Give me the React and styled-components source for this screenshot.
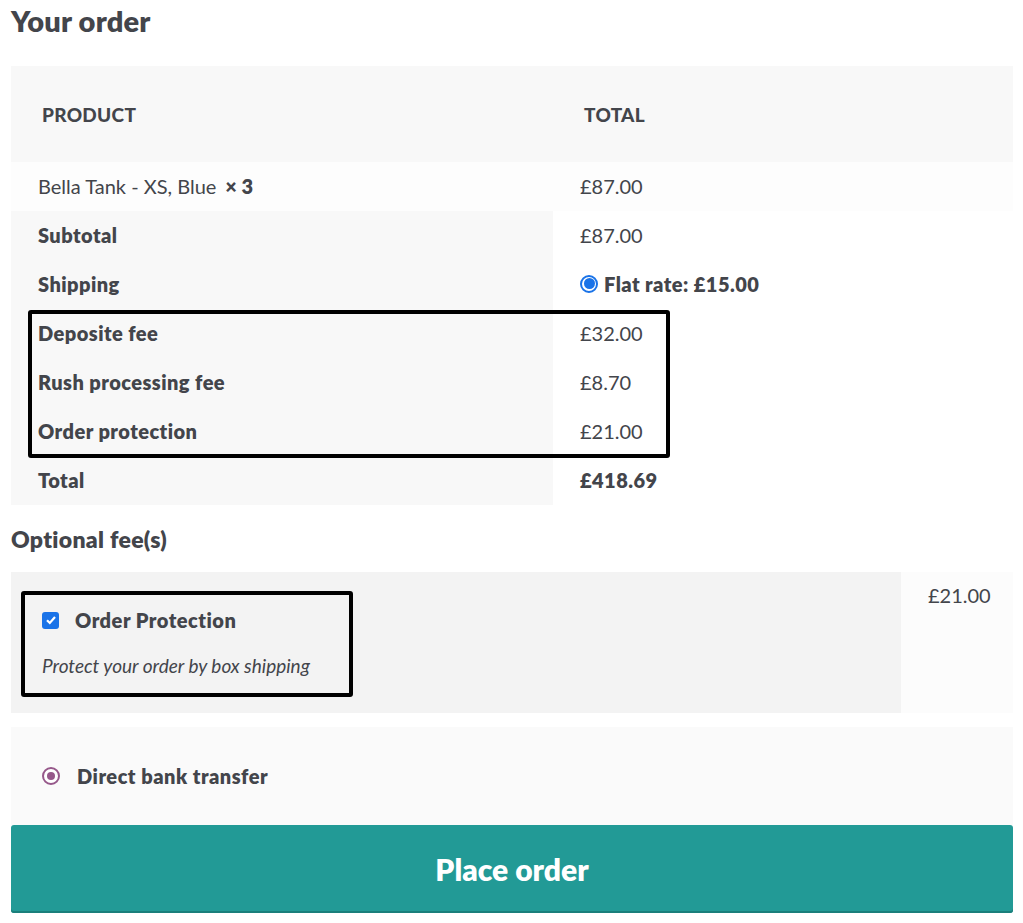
import React from "react";
import styled, { createGlobalStyle } from "styled-components";

const Global = createGlobalStyle`
  body {
    margin: 0;
    background: #fff;
    font-family: "Lato", "Liberation Sans", sans-serif;
    color: #43454b;
  }
`;

const Page = styled.div`
  width: 1002px;
  padding: 0 10px 0 11px;
`;

const Title = styled.h2`
  margin: 0;
  height: 66px;
  padding-top: 5px;
  box-sizing: border-box;
  font-size: 29px;
  font-weight: 800;
  line-height: 32px;
  letter-spacing: 0.2px;
`;

const Table = styled.div`
  position: relative;
  display: grid;
  grid-template-columns: 542px 1fr;
`;

const HeadCell = styled.div`
  background: #f8f8f8;
  height: 96px;
  display: flex;
  align-items: center;
  padding-left: ${(p) => p.$pad}px;
  font-size: 19px;
  font-weight: 900;
  letter-spacing: 0.3px;
  text-transform: uppercase;
`;

const Cell = styled.div`
  height: ${(p) => p.$h || 49}px;
  display: flex;
  align-items: center;
  padding-bottom: 2px;
  box-sizing: border-box;
  padding-left: ${(p) => p.$pad}px;
  background: ${(p) => p.$bg || "transparent"};
  font-size: 20px;
  font-weight: ${(p) => (p.$bold ? 800 : 400)};
  letter-spacing: ${(p) => (p.$bold ? "0.45px" : "0")};
  gap: 6px;
`;

const Qty = styled.strong`
  font-weight: 800;
  margin-left: 3px;
`;

const Radio = styled.span`
  width: 14px;
  height: 14px;
  border-radius: 50%;
  border: 2px solid ${(p) => p.$color};
  background: #fff;
  display: inline-block;
  flex-shrink: 0;
  position: relative;
`;

const Dot = styled.span`
  position: absolute;
  inset: ${(p) => p.$inset}px;
  border-radius: 50%;
  background: ${(p) => p.$color};
`;

const Highlight = styled.div`
  position: absolute;
  left: ${(p) => p.$x}px;
  top: ${(p) => p.$y}px;
  width: ${(p) => p.$w}px;
  height: ${(p) => p.$h}px;
  border: 4px solid #000;
  border-radius: 3px;
  box-sizing: border-box;
  pointer-events: none;
`;

const SubTitle = styled.h3`
  margin: 0;
  height: 67px;
  display: flex;
  align-items: center;
  font-size: 23px;
  font-weight: 800;
  letter-spacing: 0.3px;
`;

const FeeTable = styled.div`
  position: relative;
  display: grid;
  grid-template-columns: 890px 1fr;
  height: 141px;
`;

const FeeMain = styled.div`
  background: #f3f3f3;
  padding: 36px 0 0 31px;
`;

const FeePrice = styled.div`
  background: #fcfcfc;
  padding: 11px 0 0 27px;
  font-size: 20px;
`;

const FeeLabel = styled.label`
  display: flex;
  align-items: center;
  gap: 16px;
  font-size: 20px;
  font-weight: 800;
  letter-spacing: 0.5px;
`;

const Check = styled.span`
  width: 17px;
  height: 17px;
  border-radius: 3px;
  background: #1a73e8;
  display: flex;
  align-items: center;
  justify-content: center;
`;

const FeeDesc = styled.p`
  margin: 22px 0 0;
  font-size: 19px;
  font-style: italic;
`;

const Payment = styled.div`
  margin-top: 14px;
  height: 98px;
  background: #fafafa;
  display: flex;
  align-items: center;
  padding-left: 31px;
  gap: 17px;
  font-size: 20px;
  font-weight: 800;
  letter-spacing: 0.5px;
`;

const PlaceButton = styled.button`
  width: 100%;
  height: 88px;
  border: 0;
  border-radius: 3px;
  background: #229a96;
  box-shadow: inset 0 -2px 0 #1b7f7b;
  color: #fff;
  font-family: inherit;
  font-size: 30px;
  font-weight: 800;
`;

export default function App() {
  return (
    <Page>
      <Global />
      <Title>Your order</Title>
      <Table>
        <HeadCell $pad={31}>Product</HeadCell>
        <HeadCell $pad={31}>Total</HeadCell>
        <Cell $pad={27} $bg="#fdfdfd">
          Bella Tank - XS, Blue<Qty>× 3</Qty>
        </Cell>
        <Cell $pad={27} $bg="#fdfdfd">£87.00</Cell>
        <Cell $pad={27} $bg="#f8f8f8" $bold>Subtotal</Cell>
        <Cell $pad={27}>£87.00</Cell>
        <Cell $pad={27} $bg="#f8f8f8" $bold>Shipping</Cell>
        <Cell $pad={27} $bold>
          <Radio $color="#1a73e8">
            <Dot $color="#1a73e8" $inset={1.5} />
          </Radio>
          Flat rate: £15.00
        </Cell>
        <Cell $pad={27} $bg="#f8f8f8" $bold>Deposite fee</Cell>
        <Cell $pad={27}>£32.00</Cell>
        <Cell $pad={27} $bg="#f8f8f8" $bold>Rush processing fee</Cell>
        <Cell $pad={27}>£8.70</Cell>
        <Cell $pad={27} $bg="#f8f8f8" $bold>Order protection</Cell>
        <Cell $pad={27}>£21.00</Cell>
        <Cell $pad={27} $bg="#f8f8f8" $bold>Total</Cell>
        <Cell $pad={27} $bold>£418.69</Cell>
        <Highlight $x={17} $y={244} $w={642} $h={148} />
      </Table>
      <SubTitle>Optional fee(s)</SubTitle>
      <FeeTable>
        <FeeMain>
          <FeeLabel>
            <Check>
              <svg width="12" height="12" viewBox="0 0 12 12">
                <path d="M2 6.2 L4.8 9 L10 3" fill="none" stroke="#fff" strokeWidth="2.2" />
              </svg>
            </Check>
            Order Protection
          </FeeLabel>
          <FeeDesc>Protect your order by box shipping</FeeDesc>
        </FeeMain>
        <FeePrice>£21.00</FeePrice>
        <Highlight $x={10} $y={19} $w={332} $h={106} />
      </FeeTable>
      <Payment>
        <Radio $color="#96588a">
          <Dot $color="#96588a" $inset={3} />
        </Radio>
        Direct bank transfer
      </Payment>
      <PlaceButton>Place order</PlaceButton>
    </Page>
  );
}
